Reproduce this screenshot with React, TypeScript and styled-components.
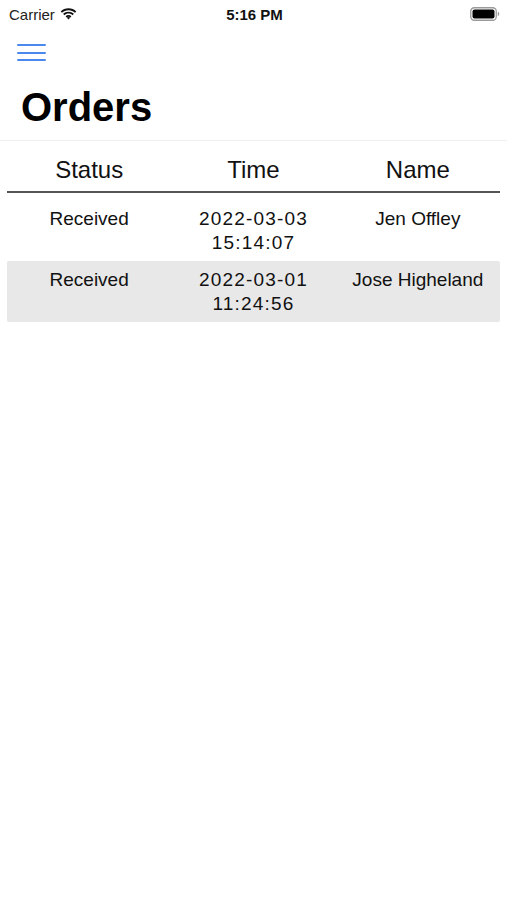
import React from "react";
import styled, { createGlobalStyle } from "styled-components";

const GlobalStyle = createGlobalStyle`
  body {
    margin: 0;
    background: #ffffff;
    font-family: "Liberation Sans", Arial, sans-serif;
    color: #111111;
  }
`;

const Screen = styled.div`
  width: 507px;
  min-height: 900px;
  background: #ffffff;
`;

const StatusBar = styled.div`
  height: 28px;
  display: grid;
  grid-template-columns: 1fr auto 1fr;
  align-items: center;
  padding: 0 7px 0 9px;
  font-size: 15px;
`;

const Carrier = styled.div`
  display: flex;
  align-items: center;
  gap: 5px;
  color: #222;
`;

const Clock = styled.div`
  font-weight: 700;
  color: #111;
`;

const Battery = styled.div`
  justify-self: end;
  display: flex;
  align-items: center;
`;

const NavBar = styled.div`
  height: 24px;
  display: flex;
  align-items: flex-start;
  padding: 16px 0 0 17px;
`;

const MenuButton = styled.button`
  border: none;
  background: none;
  padding: 0;
  display: flex;
  flex-direction: column;
  gap: 5.5px;
  cursor: pointer;
`;

const MenuLine = styled.span`
  display: block;
  width: 29px;
  height: 2px;
  border-radius: 1px;
  background: #4a88ee;
`;

const Title = styled.h1`
  margin: 0;
  padding: 6px 0 0 21px;
  height: 66px;
  line-height: 66px;
  font-size: 40px;
  font-weight: 700;
  color: #000;
  border-bottom: 1px solid #eeeeee;
`;

const Table = styled.div`
  margin: 0 7px;
`;

const HeaderRow = styled.div`
  display: grid;
  grid-template-columns: repeat(3, 1fr);
  height: 42px;
  align-items: center;
  padding-top: 8px;
  border-bottom: 2px solid #555555;
  margin-bottom: 7px;
`;

const HeadCell = styled.div`
  text-align: center;
  font-size: 24px;
  color: #111;
`;

const Row = styled.div<{ $shaded?: boolean }>`
  display: grid;
  grid-template-columns: repeat(3, 1fr);
  padding: 7px 0 6px;
  border-radius: 2px;
  background: ${(p) => (p.$shaded ? "#e8e8e8" : "transparent")};
`;

const Cell = styled.div<{ $numeric?: boolean }>`
  text-align: center;
  font-size: 19px;
  line-height: 24px;
  color: #111;
  letter-spacing: ${(p) => (p.$numeric ? "1.2px" : "normal")};
`;

const orders = [
  { status: "Received", date: "2022-03-03", time: "15:14:07", name: "Jen Offley" },
  { status: "Received", date: "2022-03-01", time: "11:24:56", name: "Jose Higheland" },
];

const Wifi = () => (
  <svg width="17" height="12" viewBox="0 0 17 12">
    <path d="M8.5 2.2c2.5 0 4.8 1 6.5 2.6l1.3-1.4C14.3 1.5 11.5.3 8.5.3S2.7 1.5.7 3.4L2 4.8c1.7-1.6 4-2.6 6.5-2.6z" fill="#111" />
    <path d="M8.5 5.6c1.6 0 3 .6 4.1 1.6l1.3-1.4C12.5 4.5 10.6 3.7 8.5 3.7S4.5 4.5 3.1 5.8l1.3 1.4c1.1-1 2.5-1.6 4.1-1.6z" fill="#111" />
    <path d="M8.5 8.9c.7 0 1.3.2 1.8.6L8.5 11.6 6.7 9.5c.5-.4 1.1-.6 1.8-.6z" fill="#111" />
    <path d="M8.5 7.1c1.1 0 2.1.4 2.9 1.1L10.3 9.4c-.5-.4-1.1-.6-1.8-.6s-1.3.2-1.8.6L5.6 8.2c.8-.7 1.8-1.1 2.9-1.1z" fill="#111" />
  </svg>
);

const BatteryIcon = () => (
  <svg width="30" height="14" viewBox="0 0 30 14">
    <rect x="0.75" y="0.75" width="25.5" height="12.5" rx="3.5" fill="none" stroke="#999" strokeWidth="1.3" />
    <rect x="2.5" y="2.5" width="22" height="9" rx="2" fill="#000" />
    <path d="M27.8 4.8v4.4c.9-.3 1.5-1.2 1.5-2.2s-.6-1.9-1.5-2.2z" fill="#999" />
  </svg>
);

export default function App() {
  return (
    <Screen>
      <GlobalStyle />
      <StatusBar>
        <Carrier>
          Carrier
          <Wifi />
        </Carrier>
        <Clock>5:16 PM</Clock>
        <Battery>
          <BatteryIcon />
        </Battery>
      </StatusBar>
      <NavBar>
        <MenuButton aria-label="Menu">
          <MenuLine />
          <MenuLine />
          <MenuLine />
        </MenuButton>
      </NavBar>
      <Title>Orders</Title>
      <Table>
        <HeaderRow>
          <HeadCell>Status</HeadCell>
          <HeadCell>Time</HeadCell>
          <HeadCell>Name</HeadCell>
        </HeaderRow>
        {orders.map((o, i) => (
          <Row key={o.date + o.time} $shaded={i % 2 === 1}>
            <Cell>{o.status}</Cell>
            <Cell $numeric>
              {o.date}
              <br />
              {o.time}
            </Cell>
            <Cell>{o.name}</Cell>
          </Row>
        ))}
      </Table>
    </Screen>
  );
}
